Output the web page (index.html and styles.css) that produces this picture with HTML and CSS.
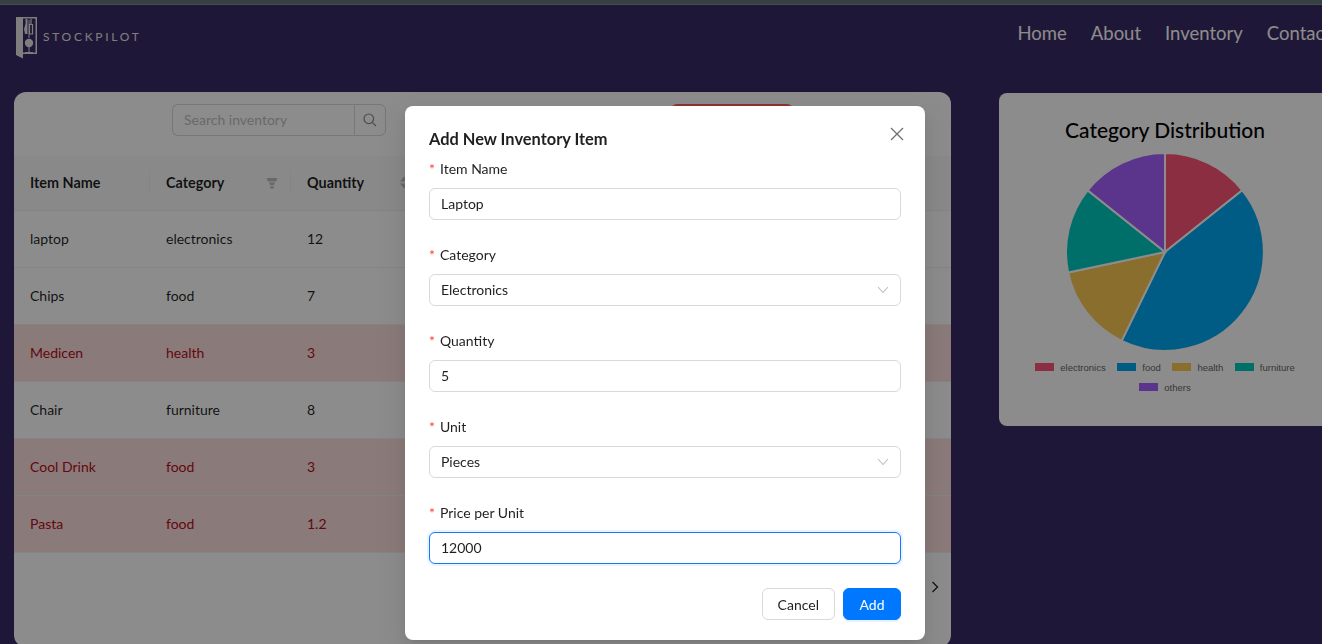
FILE: index.html
```html
<!DOCTYPE html>
<html lang="en">
<head>
  <meta charset="UTF-8">
  <title>StockPilot</title>
  <link rel="stylesheet" href="styles.css">
</head>
<body>
  <div class="top-strip"></div>

  <nav class="navbar">
    <div class="logo">
      <svg class="logo-mark" width="22" height="43" viewBox="0 0 22 43">
        <path d="M0 1H21V38H7V42.500L0 39Z M7 2.500V36.500H19.500V2.500Z" fill="#e6e6e6" fill-rule="evenodd"/>
        <path d="M9.500 3V8L8 13L9 18H11.500V3Z" fill="#e6e6e6"/>
        <path d="M15 3V8M13.500 8.500H16.500V18H13.500Z" fill="none" stroke="#e6e6e6" stroke-width="1.200"/>
        <circle cx="13" cy="27" r="4.200" fill="#e6e6e6"/>
        <path d="M13 31V36M9 36.500H17M13 4V22" fill="none" stroke="#e6e6e6" stroke-width="1"/>
      </svg>
      <span class="logo-text">STOCKPILOT</span>
    </div>
    <div class="nav-links">
      <a href="#">Home</a>
      <a href="#">About</a>
      <a href="#">Inventory</a>
      <a href="#">Contact</a>
    </div>
  </nav>

  <main class="content">
    <section class="inventory-card">
      <div class="toolbar">
        <div class="search">
          <input class="search-input" type="text" placeholder="Search inventory">
          <span class="search-btn">
            <svg width="14" height="14" viewBox="0 0 14 14" fill="none" stroke="#8a8a8a" stroke-width="1.200">
              <circle cx="5.800" cy="5.800" r="4.800"/>
              <path d="M9.300 9.300L13 13"/>
            </svg>
          </span>
        </div>
        <span class="low-stock-btn"></span>
      </div>

      <table class="inventory-table">
        <colgroup>
          <col class="col-name">
          <col class="col-category">
          <col class="col-quantity">
          <col>
        </colgroup>
        <thead>
          <tr>
            <th><span class="th-inner">Item Name</span></th>
            <th>
              <span class="th-inner">Category
                <svg width="12" height="12" viewBox="0 0 12 12" fill="#bfbfbf">
                  <path d="M0.500 1H11.500L10 4.500H2Z M3 5.500H9L8 8H4Z M4.300 9H7.700V11.500H4.300Z"/>
                </svg>
              </span>
            </th>
            <th>
              <span class="th-inner">Quantity
                <svg width="10" height="13" viewBox="0 0 10 13" fill="#bfbfbf">
                  <path d="M5 0.500L9 5.500H1Z M5 12.500L1 7.500H9Z"/>
                </svg>
              </span>
            </th>
            <th></th>
          </tr>
        </thead>
        <tbody>
          <tr><td>laptop</td><td>electronics</td><td>12</td><td></td></tr>
          <tr><td>Chips</td><td>food</td><td>7</td><td></td></tr>
          <tr class="low"><td>Medicen</td><td>health</td><td>3</td><td></td></tr>
          <tr><td>Chair</td><td>furniture</td><td>8</td><td></td></tr>
          <tr class="low"><td>Cool Drink</td><td>food</td><td>3</td><td></td></tr>
          <tr class="low"><td>Pasta</td><td>food</td><td>1.2</td><td></td></tr>
        </tbody>
      </table>

      <div class="pager">
        <svg width="10" height="12" viewBox="0 0 10 12" fill="none" stroke="#222" stroke-width="1.300">
          <path d="M2.500 1L7.500 6L2.500 11"/>
        </svg>
      </div>
    </section>

    <section class="chart-card">
      <h3 class="chart-title">Category Distribution</h3>
      <svg class="pie" width="202" height="202" viewBox="-100 -100 200 200" stroke="#fff" stroke-width="2">
        <path d="M0 0V-98A98 98 0 0 1 76.600 -61.100Z" fill="#ff5578"/>
        <path d="M0 0L76.600 -61.100A98 98 0 0 1 -43 88Z" fill="#00a7f2"/>
        <path d="M0 0L-43 88A98 98 0 0 1 -95.900 20.400Z" fill="#fbc854"/>
        <path d="M0 0L-95.900 20.400A98 98 0 0 1 -76.600 -61.100Z" fill="#00cbc1"/>
        <path d="M0 0L-76.600 -61.100A98 98 0 0 1 0 -98Z" fill="#a760ff"/>
      </svg>
      <ul class="legend">
        <li><i class="swatch swatch-electronics"></i>electronics</li>
        <li><i class="swatch swatch-food"></i>food</li>
        <li><i class="swatch swatch-health"></i>health</li>
        <li><i class="swatch swatch-furniture"></i>furniture</li>
        <li><i class="swatch swatch-others"></i>others</li>
      </ul>
    </section>
  </main>

  <div class="mask"></div>

  <div class="modal">
    <button class="modal-close" aria-label="Close">
      <svg width="14" height="14" viewBox="0 0 14 14" fill="none" stroke="#707070" stroke-width="1.300">
        <path d="M1 1L13 13M13 1L1 13"/>
      </svg>
    </button>
    <h4 class="modal-title">Add New Inventory Item</h4>

    <div class="form-item">
      <label class="form-label">Item Name</label>
      <input class="form-input" type="text" value="Laptop">
    </div>
    <div class="form-item">
      <label class="form-label">Category</label>
      <div class="form-input form-select">
        <span>Electronics</span>
        <svg class="chevron" width="12" height="8" viewBox="0 0 12 8" fill="none" stroke="#bdbdbd" stroke-width="1.100"><path d="M1 1L6 6.500L11 1"/></svg>
      </div>
    </div>
    <div class="form-item">
      <label class="form-label">Quantity</label>
      <input class="form-input" type="text" value="5">
    </div>
    <div class="form-item">
      <label class="form-label">Unit</label>
      <div class="form-input form-select">
        <span>Pieces</span>
        <svg class="chevron" width="12" height="8" viewBox="0 0 12 8" fill="none" stroke="#bdbdbd" stroke-width="1.100"><path d="M1 1L6 6.500L11 1"/></svg>
      </div>
    </div>
    <div class="form-item">
      <label class="form-label">Price per Unit</label>
      <input class="form-input focused" type="text" value="12000">
    </div>

    <div class="modal-footer">
      <button class="btn">Cancel</button>
      <button class="btn btn-primary">Add</button>
    </div>
  </div>
</body>
</html>
```

FILE: styles.css
```css
* {
  box-sizing: border-box;
}

body {
  margin: 0;
  height: 644px;
  overflow: hidden;
  background: #3a2a64;
  font-family: Lato, "Noto Sans", Arial, sans-serif;
  font-size: 14px;
  color: rgba(0, 0, 0, 0.88);
}

.top-strip {
  height: 5px;
  background: #64757a;
  border-bottom: 1px solid #7f8a8a;
}

/* navbar */
.navbar {
  display: flex;
  justify-content: space-between;
  align-items: flex-start;
  width: 1347px;
  height: 87px;
  padding: 0 16px;
}

.logo {
  display: flex;
  align-items: flex-start;
  gap: 5px;
  padding-top: 11px;
}

.logo-text {
  font-size: 12px;
  line-height: 14px;
  letter-spacing: 2.700px;
  color: #e6e6e6;
  margin-top: 14px;
}

.nav-links {
  display: flex;
  gap: 24px;
  padding-top: 16px;
}

.nav-links a {
  color: #fff;
  font-size: 18.500px;
  line-height: 25px;
  text-decoration: none;
}

/* page content */
.content {
  display: flex;
  align-items: flex-start;
  gap: 48px;
  padding-left: 14px;
}

.inventory-card {
  flex: none;
  width: 937px;
  height: 555px;
  background: #fff;
  border-radius: 12px;
}

.toolbar {
  display: flex;
  gap: 285px;
  padding: 12px 0 20px 158px;
}

.search {
  display: flex;
  width: 214px;
  height: 32px;
}

.search-input {
  width: 182px;
  padding: 3px 11px 5px;
  border: 1px solid #d9d9d9;
  border-right: 0;
  border-radius: 6px 0 0 6px;
  font: inherit;
  outline: none;
}

.search-input::placeholder {
  color: #bfbfbf;
}

.search-btn {
  display: flex;
  align-items: center;
  justify-content: center;
  width: 32px;
  border: 1px solid #d9d9d9;
  border-radius: 0 6px 6px 0;
}

.low-stock-btn {
  width: 122px;
  height: 32px;
  background: #ff5f57;
  border-radius: 6px;
}

.inventory-table {
  width: 100%;
  table-layout: fixed;
  border-collapse: collapse;
}

.col-name {
  width: 136px;
}

.col-category {
  width: 141px;
}

.col-quantity {
  width: 131px;
}

.inventory-table th {
  height: 54px;
  padding: 0;
  background: #fafafa;
  border-bottom: 1px solid #f0f0f0;
  font-size: 14.400px;
  font-weight: 700;
  text-align: left;
}

.th-inner {
  display: flex;
  align-items: center;
  justify-content: space-between;
  height: 22px;
  padding: 0 12px 0 16px;
  border-right: 1px solid #f0f0f0;
}

.inventory-table td {
  height: 57px;
  padding: 0 16px;
  border-bottom: 1px solid #f0f0f0;
}

.low td {
  background: #fddede;
  color: #b50f18;
}

.pager {
  display: flex;
  justify-content: flex-end;
  align-items: center;
  height: 32px;
  margin-top: 18px;
  padding-right: 11px;
}

.chart-card {
  flex: none;
  display: flex;
  flex-direction: column;
  align-items: center;
  width: 332px;
  height: 333px;
  margin-top: 1px;
  padding-top: 22px;
  background: #fff;
  border-radius: 8px;
}

.chart-title {
  margin: 0 0 7px;
  font-size: 21px;
  font-weight: 500;
  line-height: 29px;
  color: #000;
}

.pie {
  display: block;
}

.legend {
  display: flex;
  flex-wrap: wrap;
  justify-content: center;
  column-gap: 11.600px;
  width: 272px;
  margin: 4px 0 0;
  padding: 0;
  list-style: none;
  font-family: "Liberation Sans", Arial, sans-serif;
  font-size: 9.500px;
  color: #666;
}

.legend li {
  display: flex;
  align-items: center;
  gap: 6px;
  height: 20px;
}

.swatch {
  width: 19px;
  height: 8px;
}

.swatch-electronics { background: #ff5578; }
.swatch-food { background: #00a7f2; }
.swatch-health { background: #fbc854; }
.swatch-furniture { background: #00cbc1; }
.swatch-others { background: #a760ff; }

/* modal */
.mask {
  position: fixed;
  inset: 0;
  background: rgba(0, 0, 0, 0.45);
}

.modal {
  position: absolute;
  left: 405px;
  top: 106px;
  width: 520px;
  height: 534px;
  padding: 20px 24px;
  background: #fff;
  border-radius: 8px;
  box-shadow: 0 6px 16px rgba(0, 0, 0, 0.08), 0 3px 6px -4px rgba(0, 0, 0, 0.12), 0 9px 28px 8px rgba(0, 0, 0, 0.05);
}

.modal-close {
  position: absolute;
  top: 21px;
  right: 21px;
  display: flex;
  padding: 0;
  border: 0;
  background: none;
}

.modal-title {
  margin: 0 0 6px;
  font-size: 16.400px;
  font-weight: 700;
  line-height: 26px;
}

.form-item {
  margin-bottom: 24px;
}

.form-label {
  display: block;
  height: 22px;
  margin-bottom: 8px;
  line-height: 22px;
}

.form-label::before {
  content: "*";
  margin-right: 5px;
  color: #ff3b3b;
}

.form-input {
  display: block;
  width: 100%;
  height: 32px;
  padding: 3px 11px 5px;
  border: 1px solid #d9d9d9;
  border-radius: 6px;
  font: inherit;
  color: rgba(0, 0, 0, 0.88);
  background: #fff;
  outline: none;
}

.form-select {
  display: flex;
  align-items: center;
  justify-content: space-between;
}

.chevron {
  margin-top: 1px;
}

.focused {
  border-color: #1677ff;
  box-shadow: 0 0 0 2px rgba(5, 145, 255, 0.1);
}

.modal-footer {
  display: flex;
  justify-content: flex-end;
  gap: 8px;
}

.btn {
  height: 32px;
  padding: 4px 15px;
  border: 1px solid #d9d9d9;
  border-radius: 6px;
  background: #fff;
  font: inherit;
  color: rgba(0, 0, 0, 0.88);
}

.btn-primary {
  padding: 4px 15.500px;
  border-color: #0077ff;
  background: #0077ff;
  color: #fff;
  box-shadow: 0 2px 0 rgba(5, 145, 255, 0.1);
}
```
